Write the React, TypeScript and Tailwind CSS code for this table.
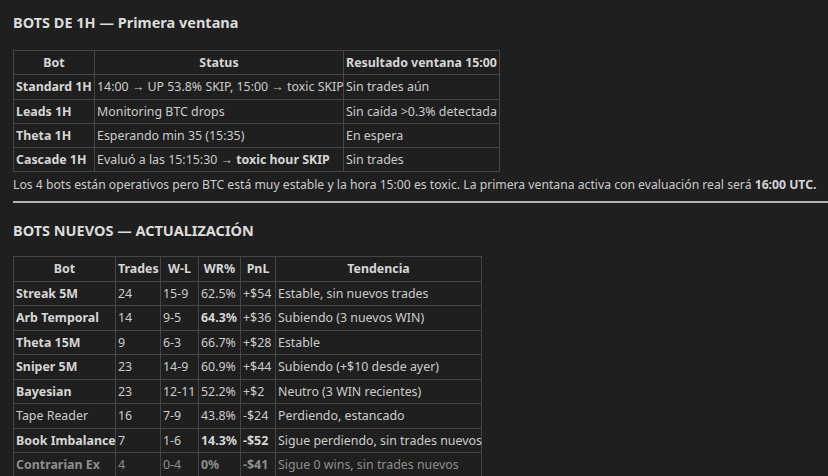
import React from "react"

type Cell = { text: React.ReactNode; bold?: boolean }

const font = { fontFamily: '"Noto Sans", "Open Sans", sans-serif' }

function Th({ children, w }: { children: React.ReactNode; w: string }) {
  return (
    <th className={`border border-[#454545] px-[2px] py-[3px] font-bold text-center whitespace-nowrap text-[#d6d6d6] ${w}`}>
      {children}
    </th>
  )
}

function Td({ cell, dim }: { cell: Cell; dim?: boolean }) {
  const color = dim ? "text-[#8e8e8e]" : cell.bold ? "text-[#d6d6d6]" : ""
  return (
    <td className={`border border-[#454545] px-[2px] py-[3px] whitespace-nowrap ${cell.bold ? "font-bold" : ""} ${color}`}>
      {cell.text}
    </td>
  )
}

const hourBots: Cell[][] = [
  [
    { text: "Standard 1H", bold: true },
    { text: "14:00 → UP 53.8% SKIP, 15:00 → toxic SKIP" },
    { text: "Sin trades aún" },
  ],
  [{ text: "Leads 1H", bold: true }, { text: "Monitoring BTC drops" }, { text: "Sin caída >0.3% detectada" }],
  [{ text: "Theta 1H", bold: true }, { text: "Esperando min 35 (15:35)" }, { text: "En espera" }],
  [
    { text: "Cascade 1H", bold: true },
    {
      text: (
        <>
          Evaluó a las 15:15:30 → <b className="text-[#d6d6d6]">toxic hour SKIP</b>
        </>
      ),
    },
    { text: "Sin trades" },
  ],
]

const newBots: { cells: Cell[]; dim?: boolean }[] = [
  { cells: [{ text: "Streak 5M", bold: true }, { text: "24" }, { text: "15-9" }, { text: "62.5%" }, { text: "+$54" }, { text: "Estable, sin nuevos trades" }] },
  { cells: [{ text: "Arb Temporal", bold: true }, { text: "14" }, { text: "9-5" }, { text: "64.3%", bold: true }, { text: "+$36" }, { text: "Subiendo (3 nuevos WIN)" }] },
  { cells: [{ text: "Theta 15M", bold: true }, { text: "9" }, { text: "6-3" }, { text: "66.7%" }, { text: "+$28" }, { text: "Estable" }] },
  { cells: [{ text: "Sniper 5M", bold: true }, { text: "23" }, { text: "14-9" }, { text: "60.9%" }, { text: "+$44" }, { text: "Subiendo (+$10 desde ayer)" }] },
  { cells: [{ text: "Bayesian", bold: true }, { text: "23" }, { text: "12-11" }, { text: "52.2%" }, { text: "+$2" }, { text: "Neutro (3 WIN recientes)" }] },
  { cells: [{ text: "Tape Reader" }, { text: "16" }, { text: "7-9" }, { text: "43.8%" }, { text: "-$24" }, { text: "Perdiendo, estancado" }] },
  { cells: [{ text: "Book Imbalance", bold: true }, { text: "7" }, { text: "1-6" }, { text: "14.3%", bold: true }, { text: "-$52", bold: true }, { text: "Sigue perdiendo, sin trades nuevos" }] },
  { cells: [{ text: "Contrarian Ex", bold: true }, { text: "4" }, { text: "0-4" }, { text: "0%", bold: true }, { text: "-$41", bold: true }, { text: "Sigue 0 wins, sin trades nuevos" }], dim: true },
]

export default function App() {
  return (
    <div className="w-[828px] h-[476px] overflow-hidden bg-[#1f1f1f] text-[#cccccc] text-[12.4px] leading-[17px]" style={font}>
      <div className="pl-[13px] pt-[12px]">
        <h2 className="text-[14.5px] leading-[20px] font-bold text-[#dcdcdc]">BOTS DE 1H — Primera ventana</h2>
        <table className="mt-[18px] w-[486px] border-collapse table-fixed leading-[17.25px]">
          <thead>
            <tr>
              <Th w="w-[81px]">Bot</Th>
              <Th w="w-[249px]">Status</Th>
              <Th w="w-[156px]">Resultado ventana 15:00</Th>
            </tr>
          </thead>
          <tbody>
            {hourBots.map((row, i) => (
              <tr key={i}>
                {row.map((c, j) => (
                  <Td key={j} cell={c} />
                ))}
              </tr>
            ))}
          </tbody>
        </table>
        <p className="mt-[4px] whitespace-nowrap text-[12.2px]">
          Los 4 bots están operativos pero BTC está muy estable y la hora 15:00 es toxic. La primera ventana activa con evaluación real será{" "}
          <b className="text-[#d6d6d6]">16:00 UTC.</b>
        </p>
        <div className="mt-[8px] h-[2px] bg-[#b4b4b4]" />
        <h2 className="mt-[17px] text-[14.5px] leading-[20px] font-bold text-[#dcdcdc]">BOTS NUEVOS — ACTUALIZACIÓN</h2>
        <table className="mt-[16px] w-[468px] border-collapse table-fixed leading-[17.5px]">
          <thead>
            <tr>
              <Th w="w-[102px]">Bot</Th>
              <Th w="w-[45px]">Trades</Th>
              <Th w="w-[38px]">W-L</Th>
              <Th w="w-[42px]">WR%</Th>
              <Th w="w-[35px]">PnL</Th>
              <Th w="w-[206px]">Tendencia</Th>
            </tr>
          </thead>
          <tbody>
            {newBots.map((row, i) => (
              <tr key={i}>
                {row.cells.map((c, j) => (
                  <Td key={j} cell={c} dim={row.dim} />
                ))}
              </tr>
            ))}
          </tbody>
        </table>
      </div>
    </div>
  )
}
